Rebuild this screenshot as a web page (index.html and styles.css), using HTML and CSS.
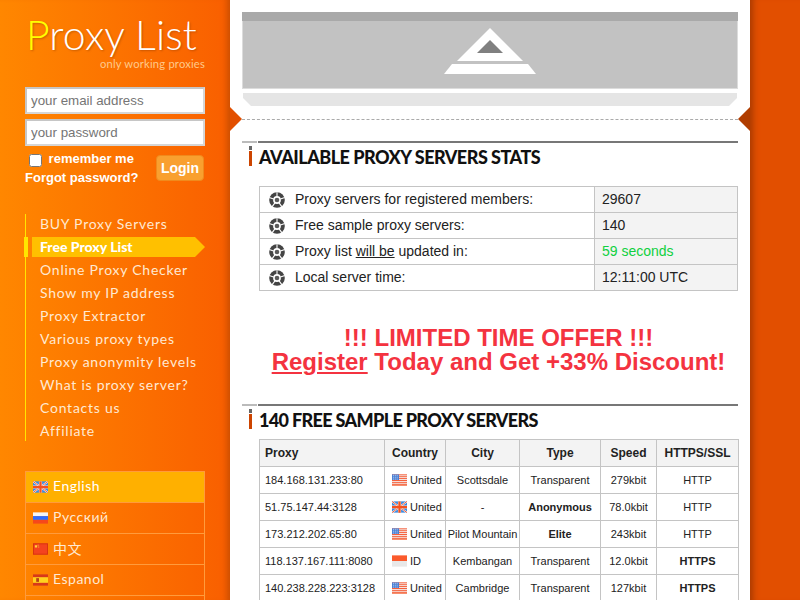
FILE: index.html
```html
<!DOCTYPE html>
<html lang="en">
<head>
    <meta charset="UTF-8">
    <title>Proxy List</title>
    <link rel="stylesheet" href="styles.css">
</head>
<body>
    <svg class="defs" width="0" height="0">
        <symbol id="ball" viewBox="0 0 16 16">
            <circle cx="8" cy="8" r="7.8" fill="#444"/>
            <circle cx="8" cy="8" r="3.9" fill="#fff"/>
            <circle cx="8" cy="8" r="2.3" fill="#5a5a5a"/>
            <path d="M8 4.4V.2M11.4 7 15.8 5.6M10.1 10.9 12.8 14.6M5.9 10.9 3.2 14.6M4.6 7 .2 5.6" stroke="#fff" stroke-width="1.1"/>
        </symbol>
        <symbol id="flag-us" viewBox="0 0 16 12">
            <rect width="16" height="12" fill="#f6f6f6"/>
            <path d="M0 .5h16M0 2.5h16M0 4.5h16M0 6.5h16M0 8.5h16M0 10.5h16" stroke="#f4512a" stroke-width="1"/>
            <rect y="11" width="16" height="1" fill="#f4511e"/>
            <rect width="7.5" height="6" fill="#4a7fd4"/>
            <path d="M1 1h6M1 3h6M1 5h6" stroke="#c6dbf5" stroke-dasharray="1 1"/>
        </symbol>
        <symbol id="flag-gb" viewBox="0 0 16 12">
            <rect width="16" height="12" fill="#3a8ae0"/>
            <path d="M0 0 16 12M16 0 0 12" stroke="#fff" stroke-width="1.8"/>
            <path d="M0 0 16 12M16 0 0 12" stroke="#f0552f" stroke-width="1"/>
            <path d="M8 0V12M0 6H16" stroke="#fde0d4" stroke-width="3.4"/>
            <path d="M8 0V12M0 6H16" stroke="#f4511e" stroke-width="2.4"/>
        </symbol>
        <symbol id="flag-ru" viewBox="0 0 16 12">
            <rect width="16" height="4" fill="#f4f4f4"/>
            <rect y="4" width="16" height="4" fill="#2f6bff"/>
            <rect y="8" width="16" height="4" fill="#f6481a"/>
        </symbol>
        <symbol id="flag-cn" viewBox="0 0 16 12">
            <rect width="16" height="12" fill="#f4431f"/>
            <rect x=".5" y=".5" width="15" height="11" fill="none" stroke="#d8340f"/>
            <rect x="2" y="2" width="2.4" height="2.4" fill="#ffd23a"/>
            <rect x="5" y="1.4" width="1" height="1" fill="#ffd23a"/>
            <rect x="5.6" y="3.4" width="1" height="1" fill="#ffd23a"/>
        </symbol>
        <symbol id="flag-es" viewBox="0 0 16 12">
            <rect width="16" height="12" fill="#d8381a"/>
            <rect y="3" width="16" height="6" fill="#ffd21e"/>
            <rect x="3.4" y="4" width="3" height="4" fill="#b8421a"/>
        </symbol>
        <symbol id="flag-id" viewBox="0 0 16 12">
            <rect width="16" height="6" fill="#fb5a2c"/>
            <rect y="6" width="16" height="6" fill="#e8e8e8"/>
        </symbol>
    </svg>

    <div class="page">
        <aside class="sidebar">
            <div class="logo">
                <div class="logo-name"><span class="logo-first">P</span>roxy List</div>
                <div class="logo-tag">only working proxies</div>
            </div>

            <form class="login">
                <input class="login-input" type="text" placeholder="your email address">
                <input class="login-input" type="password" placeholder="your password">
                <div class="login-foot">
                    <div class="login-links">
                        <label class="remember"><input type="checkbox"> remember me</label>
                        <a class="forgot" href="#">Forgot password?</a>
                    </div>
                    <button class="login-btn" type="button">Login</button>
                </div>
            </form>

            <ul class="nav">
                <li><a href="#">BUY Proxy Servers</a></li>
                <li class="active"><a href="#">Free Proxy List</a></li>
                <li><a href="#">Online Proxy Checker</a></li>
                <li><a href="#">Show my IP address</a></li>
                <li><a href="#">Proxy Extractor</a></li>
                <li><a href="#">Various proxy types</a></li>
                <li><a href="#">Proxy anonymity levels</a></li>
                <li><a href="#">What is proxy server?</a></li>
                <li><a href="#">Contacts us</a></li>
                <li class="last"><a href="#">Affiliate</a></li>
            </ul>

            <ul class="langs">
                <li class="active"><svg class="flag"><use href="#flag-gb"/></svg>English</li>
                <li><svg class="flag"><use href="#flag-ru"/></svg>Русский</li>
                <li><svg class="flag"><use href="#flag-cn"/></svg>中文</li>
                <li><svg class="flag"><use href="#flag-es"/></svg>Espanol</li>
                <li></li>
            </ul>
        </aside>

        <main class="main">
            <div class="notch notch-left"></div>
            <div class="notch notch-right"></div>

            <div class="banner">
                <div class="banner-top"></div>
                <div class="banner-body">
                    <svg class="banner-logo" width="92" height="46" viewBox="0 0 92 46">
                        <path d="M46 0 79 33H13Z" fill="#fff"/>
                        <path d="M46 12 59 25H33Z" fill="#808080"/>
                        <path d="M8 36H84L92 46H0Z" fill="#fff"/>
                    </svg>
                </div>
                <div class="banner-foot"></div>
            </div>
            <div class="dashed"></div>

            <h2 class="section-title"><span>AVAILABLE PROXY SERVERS STATS</span></h2>
            <table class="stats">
                <tr>
                    <td><svg class="ball"><use href="#ball"/></svg>Proxy servers for registered members:</td>
                    <td>29607</td>
                </tr>
                <tr>
                    <td><svg class="ball"><use href="#ball"/></svg>Free sample proxy servers:</td>
                    <td>140</td>
                </tr>
                <tr>
                    <td><svg class="ball"><use href="#ball"/></svg>Proxy list <u>will be</u> updated in:</td>
                    <td class="green">59 seconds</td>
                </tr>
                <tr>
                    <td><svg class="ball"><use href="#ball"/></svg>Local server time:</td>
                    <td>12:11:00 UTC</td>
                </tr>
            </table>

            <div class="offer">
                !!! LIMITED TIME OFFER !!!<br>
                <u>Register</u> Today and Get +33% Discount!
            </div>

            <h2 class="section-title tight"><span>140 FREE SAMPLE PROXY SERVERS</span></h2>
            <table class="proxies">
                <tr>
                    <th class="col-proxy">Proxy</th>
                    <th class="col-country">Country</th>
                    <th class="col-city">City</th>
                    <th class="col-type">Type</th>
                    <th class="col-speed">Speed</th>
                    <th class="col-ssl">HTTPS/SSL</th>
                </tr>
                <tr>
                    <td class="addr">184.168.131.233:80</td>
                    <td class="country"><svg class="flag"><use href="#flag-us"/></svg>United</td>
                    <td>Scottsdale</td>
                    <td>Transparent</td>
                    <td>279kbit</td>
                    <td>HTTP</td>
                </tr>
                <tr>
                    <td class="addr">51.75.147.44:3128</td>
                    <td class="country"><svg class="flag"><use href="#flag-gb"/></svg>United</td>
                    <td>-</td>
                    <td><b>Anonymous</b></td>
                    <td>78.0kbit</td>
                    <td>HTTP</td>
                </tr>
                <tr>
                    <td class="addr">173.212.202.65:80</td>
                    <td class="country"><svg class="flag"><use href="#flag-us"/></svg>United</td>
                    <td>Pilot Mountain</td>
                    <td><b>Elite</b></td>
                    <td>243kbit</td>
                    <td>HTTP</td>
                </tr>
                <tr>
                    <td class="addr">118.137.167.111:8080</td>
                    <td class="country"><svg class="flag"><use href="#flag-id"/></svg>ID</td>
                    <td>Kembangan</td>
                    <td>Transparent</td>
                    <td>12.0kbit</td>
                    <td><b>HTTPS</b></td>
                </tr>
                <tr>
                    <td class="addr">140.238.228.223:3128</td>
                    <td class="country"><svg class="flag"><use href="#flag-us"/></svg>United</td>
                    <td>Cambridge</td>
                    <td>Transparent</td>
                    <td>127kbit</td>
                    <td><b>HTTPS</b></td>
                </tr>
            </table>
        </main>

        <div class="side-right"></div>
    </div>
</body>
</html>
```
FILE: styles.css
```css
html, body {
    margin: 0;
    padding: 0;
    height: 100%;
    overflow: hidden;
}

body {
    font-family: "Liberation Sans", Arial, sans-serif;
    color: #222;
}

.defs {
    position: absolute;
}

.page {
    display: flex;
    width: 800px;
    height: 600px;
    overflow: hidden;
}

/* left column */
.sidebar {
    flex: 0 0 230px;
    min-width: 0;
    box-sizing: border-box;
    padding: 0 25px;
    background: linear-gradient(to right, #ff8700, #f95f00);
    box-shadow: inset -8px 0 6px -5px #c94e00;
    color: #fff;
}

.logo {
    height: 87px;
    font-family: Lato, sans-serif;
    font-weight: 300;
}

.logo-name {
    padding: 12px 0 0 1px;
    font-size: 41px;
    line-height: 46px;
    white-space: nowrap;
    letter-spacing: .1px;
    text-shadow: 1px 1px 2px rgba(120, 50, 0, .4);
}

.logo-first {
    color: #ffff00;
}

.logo-tag {
    font-size: 11.2px;
    font-weight: 400;
    line-height: 12px;
    text-align: right;
    color: #ffc98a;
    letter-spacing: .2px;
}

.login {
    display: flex;
    flex-direction: column;
    gap: 5px;
}

.login-input {
    box-sizing: border-box;
    width: 180px;
    height: 27px;
    margin: 0;
    padding: 0 4px;
    border: 2px solid #c6c6c6;
    border-right-color: #d6d6d6;
    border-bottom-color: #d6d6d6;
    background: #fff;
    font: 13.33px "Liberation Sans", Arial, sans-serif;
}

.login-input::placeholder {
    color: #757575;
}

.login-foot {
    display: flex;
    justify-content: space-between;
    align-items: center;
    margin-top: -2px;
}

.login-links {
    font-size: 13px;
    font-weight: bold;
    line-height: 19px;
}

.remember {
    display: block;
}

.remember input {
    width: 13px;
    height: 13px;
    margin: 0 3px 0 4px;
    vertical-align: -4px;
}

.forgot {
    color: #fff;
    text-decoration: none;
}

.login-btn {
    width: 48px;
    height: 26px;
    margin-right: 1px;
    padding: 0;
    border: 1px solid #f08a1c;
    border-radius: 4px;
    background: #f9a02f;
    color: #fff;
    font: bold 14px "Liberation Sans", Arial, sans-serif;
}

.nav {
    list-style: none;
    margin: 27px 0 0;
    padding: 0;
    border-left: 1px solid #ffe600;
}

.nav li {
    height: 23px;
    line-height: 20px;
    font-family: Lato, sans-serif;
    font-size: 14px;
    letter-spacing: .75px;
    padding-left: 14px;
    white-space: nowrap;
}

.nav li.last {
    height: 20px;
}

.nav a {
    color: #ffe9d2;
    text-decoration: none;
}

.nav li.active {
    position: relative;
    padding-left: 6px;
}

.nav li.active::before {
    content: "";
    position: absolute;
    top: 0;
    left: -2px;
    width: 4px;
    height: 20px;
    background: #ffe600;
}

.nav li.active a {
    display: block;
    box-sizing: border-box;
    width: 173px;
    height: 20px;
    padding-left: 8px;
    background: #ffc000;
    clip-path: polygon(0 0, 163px 0, 173px 50%, 163px 100%, 0 100%);
    color: #fff;
    font-weight: 900;
    letter-spacing: 0;
}

.langs {
    list-style: none;
    margin: 30px 0 0;
    padding: 0;
    border: 1px solid #ff9b3c;
    border-bottom: 0;
}

.langs li {
    display: flex;
    align-items: center;
    box-sizing: border-box;
    height: 31px;
    padding: 0 0 3px 7px;
    border-bottom: 1px solid #ff9b3c;
    font-family: Lato, "Noto Sans CJK SC", sans-serif;
    font-size: 14px;
    letter-spacing: .5px;
    color: #ffe9d2;
}

.langs li.active {
    background: #ffb000;
    color: #fff;
}

.flag {
    flex: none;
    width: 15px;
    height: 12px;
    margin-right: 3px;
    vertical-align: -2px;
}

.langs .flag {
    margin: 3px 5px 0 0;
}

/* middle column */
.main {
    position: relative;
    flex: 0 0 520px;
    min-width: 0;
    box-sizing: border-box;
    padding: 12px 12px 0;
    background: #fff;
}

.notch {
    position: absolute;
    top: 107px;
    width: 12px;
    height: 24px;
}

.notch-left {
    left: 0;
    background: #e24f00;
    clip-path: polygon(0 0, 100% 50%, 0 100%);
}

.notch-right {
    right: 0;
    background: #b03d00;
    clip-path: polygon(100% 0, 0 50%, 100% 100%);
}

.banner-top {
    height: 9px;
    background: #a9a9a9;
}

.banner-body {
    display: flex;
    justify-content: center;
    align-items: flex-start;
    box-sizing: border-box;
    height: 68px;
    padding-top: 7px;
    background: #c2c2c2;
    border: 1px solid #dcdcdc;
    border-top: 0;
}

.banner-foot {
    height: 13px;
    margin: 4px 1px 0;
    background: #e5e5e5;
    clip-path: polygon(0 0, 100% 0, 100% 5px, calc(100% - 8px) 100%, 8px 100%, 0 5px);
}

.dashed {
    margin-top: 13px;
    border-top: 1px dashed #aaa;
}

.section-title {
    position: relative;
    margin: 21px 0 0;
    padding: 4px 0 0 17px;
    height: 35px;
    box-sizing: border-box;
    border-top: 2px solid #777;
    font-family: Lato, sans-serif;
    font-size: 18px;
    font-weight: 900;
    line-height: 21px;
    letter-spacing: -.5px;
    color: #111;
}

.section-title.tight {
    letter-spacing: -.65px;
}

.section-title::before {
    content: "";
    position: absolute;
    top: -2px;
    left: 0;
    width: 15px;
    height: 2px;
    background: #bbb;
    border-right: 1px solid #fff;
}

.section-title::after {
    content: "";
    position: absolute;
    top: 3px;
    left: 7px;
    width: 3px;
    height: 20px;
    background: linear-gradient(to bottom, #666 4px, #fff 4px, #fff 5px, #cc4400 5px);
}

.stats {
    width: 479px;
    margin: 10px 0 0 17px;
    border-collapse: collapse;
    font-size: 14px;
    color: #222;
}

.stats td {
    height: 26px;
    padding: 0 7px;
    border: 1px solid #c4c4c4;
    box-sizing: border-box;
}

.stats td:first-child {
    width: 335px;
    padding-left: 9px;
    background: #fff;
}

.stats td:last-child {
    padding-bottom: 2px;
    background: #f3f3f3;
}

.stats .green {
    color: #10d040;
}

.ball {
    width: 16px;
    height: 16px;
    margin-right: 10px;
    vertical-align: -4px;
}

.offer {
    margin: 35px 0 30px 17px;
    font-size: 24px;
    font-weight: bold;
    line-height: 24px;
    text-align: center;
    color: #f43340;
}

.proxies {
    width: 479px;
    margin: 0 0 0 17px;
    border-collapse: collapse;
    table-layout: fixed;
    font-size: 11px;
    color: #222;
}

.proxies tr {
    height: 27px;
}

.proxies th, .proxies td {
    padding: 0;
    border: 1px solid #c4c4c4;
    box-sizing: border-box;
    text-align: center;
    white-space: nowrap;
    overflow: hidden;
}

.proxies th {
    background: #f3f3f3;
    font-size: 12px;
}

.proxies th.col-proxy, .proxies td.addr {
    text-align: left;
    padding-left: 5px;
}

.proxies td.country {
    text-align: left;
    padding-left: 7px;
}

.proxies .col-proxy { width: 125px; }
.proxies .col-country { width: 61px; }
.proxies .col-city { width: 74px; }
.proxies .col-type { width: 81px; }
.proxies .col-speed { width: 56px; }
.proxies .col-ssl { width: 82px; }

/* right column */
.side-right {
    flex: 1;
    background: #e24f00;
    box-shadow: inset 8px 0 6px -5px #a83a00;
}
```
